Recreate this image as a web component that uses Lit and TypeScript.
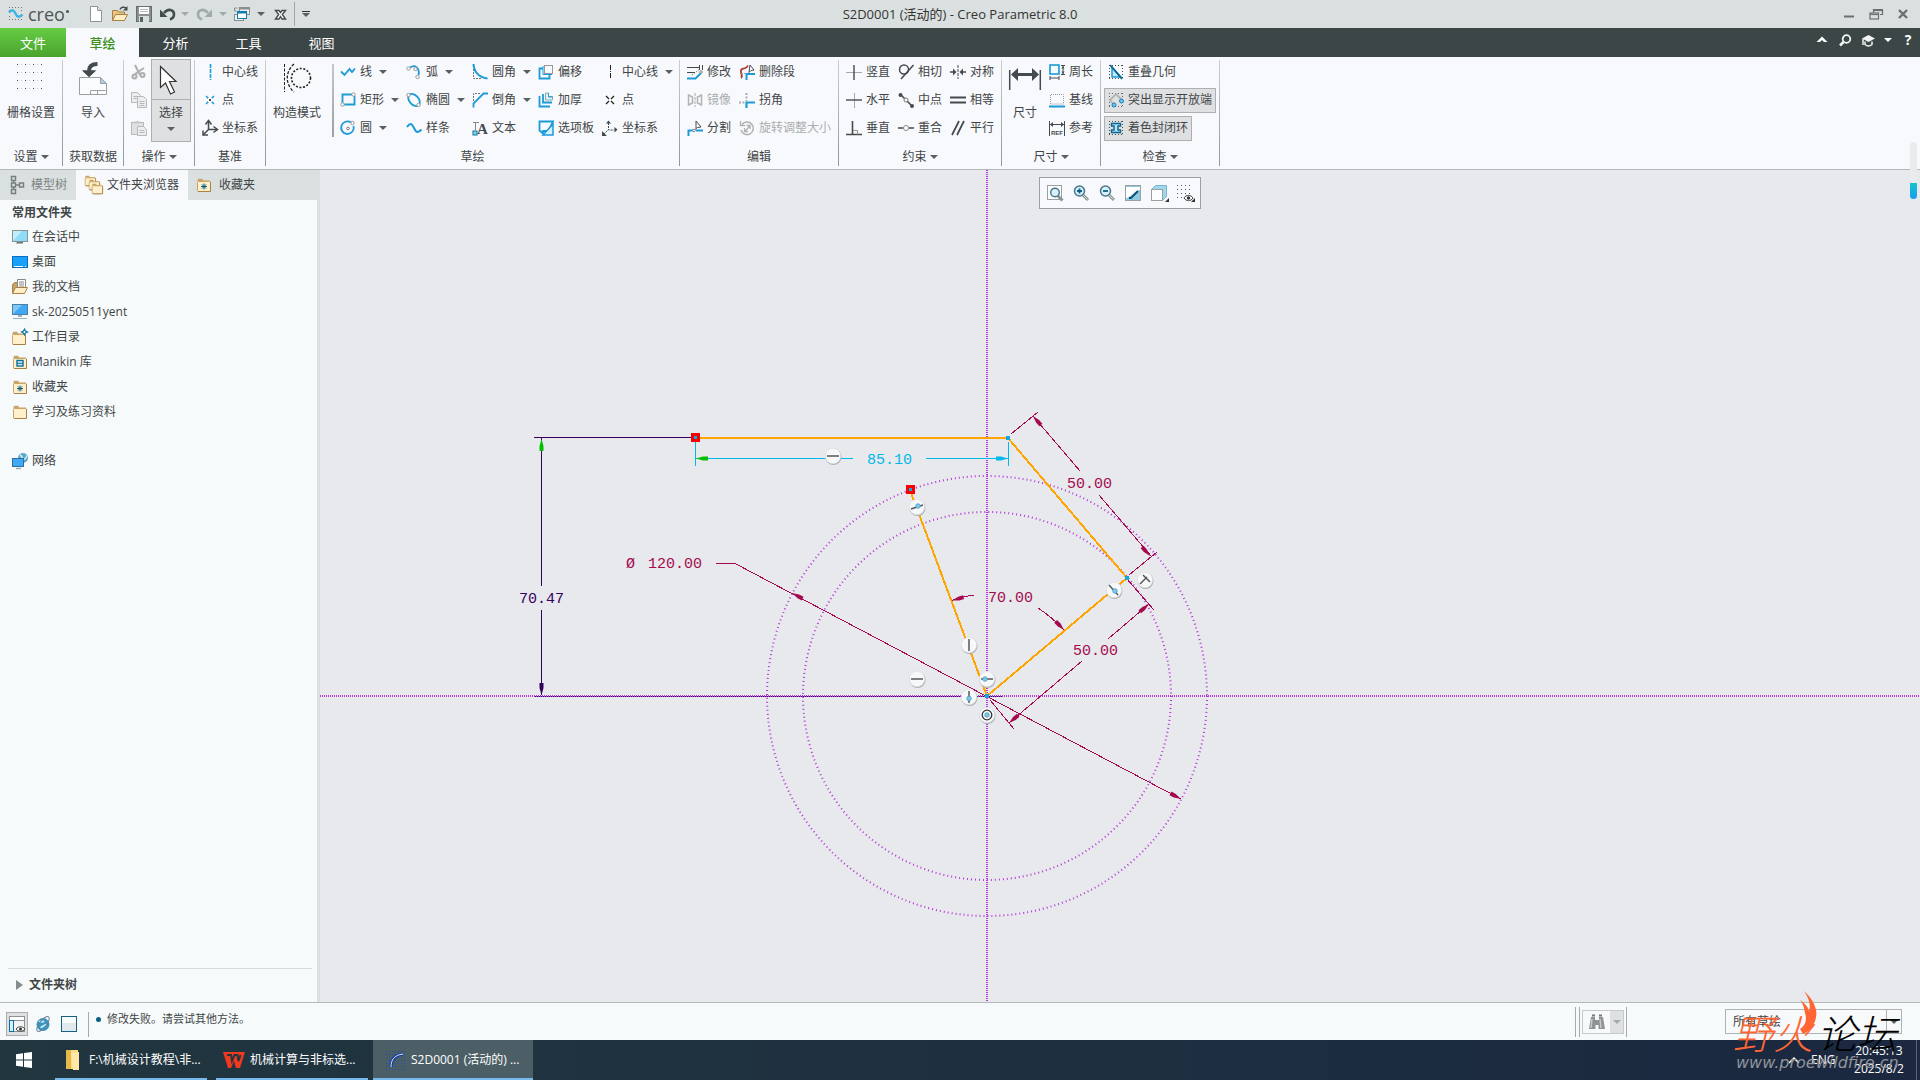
import { LitElement, html, svg, css, nothing, TemplateResult } from "lit";
import { customElement } from "lit/decorators.js";
import { classMap } from "lit/directives/class-map.js";

const B = "#1b9bd7";
const K = "#444b4d";

const folder = (x = 0, y = 0) => svg`<g transform="translate(${x} ${y})">
  <path d="M1.5 3.5V1.8L2.5.8H6L7.5 2.5H14V4z" fill="#c9a468"/>
  <rect x="1.5" y="3.5" width="13" height="10" rx="1" fill="#ffefcb" stroke="#c9a468"/>
  <path d="M2 13.5H14.5V4" fill="none" stroke="#a98243"/></g>`;

const star = (x: number, y: number, r = 3) => svg`<path d="M${x - r} ${y}h${2 * r}M${x} ${y - r}v${2 * r}M${x - r * 0.7} ${y - r * 0.7}l${r * 1.4} ${r * 1.4}M${x + r * 0.7} ${y - r * 0.7}l${-r * 1.4} ${r * 1.4}" stroke="#0d5f86" fill="none"/>`;

const ring = (x: number, y: number) => svg`<circle cx=${x} cy=${y} r="1.7" fill="#fff" stroke="#999"/>`;

const lens = (sign: unknown) => svg`<path d="M10 10l5 5" stroke="#8d9494" stroke-width="3"/><path d="M10 10l4.500 4.500" stroke="#d5dada"/><circle cx="6.500" cy="6" r="5" fill="#d8f1fb" stroke="#49748a" stroke-width="1.500"/>${sign}`;

const icons: Record<string, unknown> = {
  logo: svg`<g fill="#6d7778">${[1, 4, 7, 10, 13].map((x) => [1, 13].map((y) => svg`<rect x=${x} y=${y} width="1" height="1"/>`))}${[4, 10].map((y) => svg`<rect x="1" y=${y} width="1" height="1"/><rect x="13" y=${y} width="1" height="1"/>`)}</g><path d="M1 6.500C4 3 6 4 7.500 7.500S11 12 14.500 8.500" fill="none" stroke="#3cb4e5" stroke-width="2.400"/>`,
  newDoc: svg`<path d="M2.500.5h7l4 4v11h-11z" fill="#fff" stroke="#8d9494"/><path d="M9.500.5v4h4" fill="#dfe5e5" stroke="#8d9494"/>`,
  open: svg`<path d="M.5 14.500V4.500h5l1 1.500h6v3" fill="#e9c487" stroke="#a98243"/><path d="M.5 14.500l3-6h12l-3 6z" fill="#ffeec4" stroke="#a98243"/><path d="M8 3.500C9 1 12 .5 14 2" fill="none" stroke="${K}" stroke-width="1.500"/><path d="M15.500 0v4.500h-4.500z" fill="${K}"/>`,
  save: svg`<rect x=".5" y=".5" width="15" height="15" fill="#8a9192" stroke="#666d6e"/><rect x="3" y="1" width="10" height="7" fill="#fff"/><rect x="3" y="10" width="10" height="6" fill="#d7dcdc"/><rect x="4" y="11" width="3" height="5" fill="#5b6263"/><path d="M4 3.500h8M4 5.500h8" stroke="#bbb"/>`,
  undo: svg`<path d="M4 7C8 2 14 3.500 14 8.500 14 11 12.500 12.500 10 13.500" fill="none" stroke="${K}" stroke-width="2.600"/><path d="M0 3.500V11h7.500z" fill="${K}"/>`,
  redo: svg`<path d="M12 7C8 2 2 3.500 2 8.500 2 11 3.500 12.500 6 13.500" fill="none" stroke="#a3aaaa" stroke-width="2.600"/><path d="M16 3.500V11H8.500z" fill="#a3aaaa"/>`,
  windows: svg`<rect x="5.500" y="1.500" width="10" height="7" fill="#eef1f1" stroke="#888f90"/><path d="M5.500 2.500h10" stroke="#888f90" stroke-width="2"/><rect x=".5" y="8.500" width="9" height="6" fill="#eef1f1" stroke="#888f90"/><rect x="3.500" y="5.500" width="9" height="7" fill="#fff" stroke="#0e7fae"/><path d="M3.500 6.500h9" stroke="#0e7fae" stroke-width="2"/><path d="M.5 2v3h2M.5 2h3" fill="none" stroke="#888f90"/>`,
  closeBox: svg`<path d="M3.500 4.500h3.500l1.500 2 1.500-2h3.500l-3.200 4 3.200 4.500h-3.500l-1.500-2.500-1.500 2.500h-3.500l3.200-4.500z" fill="#fff" stroke="${K}" stroke-width="1.400"/>`,
  cut: svg`<g fill="none" stroke="#aaafaf" stroke-width="2"><path d="M4 1l5 10M13 4L4 10"/><circle cx="3.500" cy="12.500" r="2"/><circle cx="11.500" cy="11" r="2"/></g>`,
  copy: svg`<g fill="#eceeee" stroke="#b4b9b9"><path d="M.5.5h6l3 3v7h-9z"/><path d="M6.500 4.500h6l3 3v8h-9z"/></g><path d="M2.500 4.500h4M2.500 6.500h3M8.500 9.500h5M8.500 11.500h5M8.500 13.500h5" stroke="#b4b9b9"/>`,
  paste: svg`<rect x=".5" y="2.500" width="12" height="12" fill="#dfe2e2" stroke="#b4b9b9"/><path d="M3.500 3.500h6v-2h-2l-1-1-1 1h-2z" fill="#c3c7c7"/><path d="M6.500 6.500h6l3 3v6h-9z" fill="#eceeee" stroke="#b4b9b9"/><path d="M8.500 10.500h5M8.500 12.500h5" stroke="#b4b9b9"/>`,
  axis: svg`<path d="M8.500 0v16" stroke="${B}" stroke-width="1.600" stroke-dasharray="4 1"/>`,
  pointBlue: svg`<path d="M4 4l8 8M12 4l-8 8" stroke="${B}" stroke-width="1.500"/><rect x="6" y="6" width="4" height="4" fill="#f8f9fc"/><rect x="7" y="7" width="2" height="2" fill="${K}"/>`,
  csys: svg`<path d="M6.500 10V1M6.500 9.500H15M6.500 9.500L1 15" fill="none" stroke="${K}" stroke-width="1.500"/><path d="M3.500 4.500l3-4 3 4M11.500 6.500l4 3-4 3M1 10.500V15h5" fill="none" stroke="${K}" stroke-width="1.500"/>`,
  line: svg`<path d="M1 7.500l3.500 3.500 5-6 2.500 3 3-3.500" fill="none" stroke="${B}" stroke-width="1.800"/>`,
  rect: svg`<path d="M2.500 11V2.500H13M4 12.500h10.500V4" fill="none" stroke="${B}" stroke-width="1.800"/>${ring(13.5, 2.5)}${ring(2.5, 12.5)}`,
  circle: svg`<path d="M11 2.500A6.300 6.300 0 1 0 13.500 6" fill="none" stroke="${B}" stroke-width="1.800"/><circle cx="8" cy="8.500" r="1.300" fill="#fff" stroke="#777"/>${ring(12.5, 3)}`,
  arc: svg`<path d="M4 3.500C9 0 14 4 12.500 11" fill="none" stroke="${B}" stroke-width="1.800"/>${ring(2.5, 4.5)}${ring(9.5, 5)}${ring(11.5, 13)}`,
  ellipse: svg`<ellipse cx="8" cy="8" rx="7" ry="4.600" transform="rotate(48 8 8)" fill="none" stroke="${B}" stroke-width="1.800"/>${ring(2.5, 3)}${ring(12.5, 13)}`,
  spline: svg`<path d="M1 7C4 2 6 3.500 8 8s4 5.500 7.500 1.500" fill="none" stroke="${B}" stroke-width="2"/>`,
  fillet: svg`<path d="M1.500 0C2 8 6 13 15.500 14.500" fill="none" stroke="${B}" stroke-width="2"/><path d="M1.500 5v9.500H10" fill="none" stroke="#777" stroke-dasharray="2 1"/>`,
  chamfer: svg`<path d="M1.500 15.500V11.500L11.500 1.500H16" fill="none" stroke="${B}" stroke-width="1.800"/><path d="M1.500 9V1.500H9" fill="none" stroke="#777" stroke-dasharray="2 1"/>`,
  text: svg`<text x="5" y="14" font-family="Liberation Serif, serif" font-weight="bold" font-size="15" fill="${K}">A</text><path d="M1 2.500h6M3.500 2v8" stroke="#888"/><rect x="1" y="11" width="4" height="4" fill="#8bd3f2" stroke="#0d6f9e"/>`,
  offset: svg`<rect x="6.500" y="1.500" width="8" height="8" fill="none" stroke="#999"/><path d="M5 4.500H1.500v10h10V11" fill="none" stroke="${B}" stroke-width="1.800"/><path d="M5 2v8.500h9" fill="none" stroke="${B}"/>`,
  thicken: svg`<path d="M7.500 1v7h7V4.500h-4V1z" fill="#dff3fc" stroke="#8aa" /><path d="M10.500 1v4h4" stroke="${B}" fill="none"/><path d="M1.500 4v10.500H12M5 2v8.500h9" fill="none" stroke="${B}" stroke-width="1.800"/>`,
  palette: svg`<path d="M15 1.500H1.500v9L5 13.500V11h5.500z" fill="none" stroke="${B}" stroke-width="1.800"/><path d="M15 4v11H5z" fill="#d8f0fb" stroke="${B}" stroke-width="1.500"/>`,
  centerline: svg`<path d="M8.500 1v14" stroke="#222" stroke-width="1" stroke-dasharray="5 1 1 1"/>`,
  point: svg`<path d="M4 4l3 3M12 4l-3 3M4 12l3-3M12 12l-3-3" stroke="#222" stroke-width="1.300"/>`,
  csysDash: svg`<path d="M6.500 3v7h6M5.500 10.500L2 14" fill="none" stroke="${K}" stroke-dasharray="2 1"/><path d="M4 3.500L6.500.5 9 3.500zM12.500 7l3 2.500-3 3zM0 11v5h5z" fill="${K}"/>`,
  modify: svg`<path d="M0 3.500h13M0 8.500h8" stroke="${K}"/><path d="M12.500 1v5M15.500 1v5" stroke="${K}"/><path d="M0 14.500h8.500L14 9" fill="none" stroke="${B}" stroke-width="1.800"/><path d="M5 11l8-6" stroke="#888" stroke-dasharray="1.500 1"/><circle cx="14" cy="8" r="1.300" fill="#fff" stroke="#888"/>`,
  mirror: svg`<path d="M8 1v14" stroke="#aaa" stroke-dasharray="3 1"/><path d="M1.500 13V3l4 2v6zM14.500 13V3l-4 2v6z" fill="none" stroke="#b0b4b4" stroke-width="1.500"/>`,
  divide: svg`<path d="M1.500 16v-5.500H6M9 10.500h7" fill="none" stroke="${B}" stroke-width="2"/><path d="M9 1l5 6-3.500.5L6 11M9 1v7" fill="#fff" stroke="${K}"/><circle cx="7" cy="10.500" r="1.300" fill="#fff" stroke="#888"/>`,
  deleteSeg: svg`<path d="M2 14C5 12 0 8 2.500 5.500S7 6 9 1.500" fill="none" stroke="#b23a32" stroke-width="1.800"/><path d="M7.500 16v-6H16" fill="none" stroke="${B}" stroke-width="2"/><path d="M11 1l4 5-3 .5-2 2z" fill="#fff" stroke="${K}"/><path d="M2 9.500h4" stroke="#999" stroke-dasharray="2 1"/>`,
  corner: svg`<path d="M7.500 16v-5.500H16" fill="none" stroke="${B}" stroke-width="2.200"/><path d="M7.500 1v8M0 10.500h6" stroke="#aaa" stroke-width="2" stroke-dasharray="2 1.500"/>`,
  rotate: svg`<path d="M3 4.500A6.300 6.300 0 1 1 2 10" fill="none" stroke="#adb1b1" stroke-width="1.500"/><path d="M1.500 1v4.500H6M6 11l5-5M7.500 5.500H11V9M5.500 8v3.500H9" fill="none" stroke="#adb1b1" stroke-width="1.300"/>`,
  vertical: svg`<path d="M0 8.500h16" stroke="#a5a9a9"/><path d="M8 1v15" stroke="${K}" stroke-width="1.400"/>`,
  horizontal: svg`<path d="M8.500 1v15" stroke="#a5a9a9"/><path d="M0 8h16" stroke="${K}" stroke-width="1.400"/>`,
  perp: svg`<path d="M0 14.500h16M6.500 1v13" stroke="${K}" stroke-width="1.600" fill="none"/><path d="M7 10.500h4.500v4" fill="none" stroke="#999"/>`,
  tangent: svg`<circle cx="6" cy="5.500" r="4.500" fill="none" stroke="${K}" stroke-width="1.500"/><path d="M3 15L15.500 1" stroke="${K}" stroke-width="1.500"/>`,
  midpoint: svg`<path d="M3 3l10 10" stroke="${K}" stroke-width="1.600"/><circle cx="2.500" cy="3" r="2" fill="${K}"/><circle cx="14" cy="14" r="2" fill="${K}"/><circle cx="8" cy="8" r="2" fill="#fff" stroke="#777"/>`,
  coincide: svg`<path d="M0 8h5M11 8h5" stroke="${K}" stroke-width="1.500"/><circle cx="8" cy="8" r="2.500" fill="#fff" stroke="#888"/>`,
  symmetric: svg`<path d="M0 8h4M12 8h4" stroke="${K}" stroke-width="1.500"/><path d="M3 4.500L6.500 8 3 11.500zM13 4.500L9.500 8l3.500 3.500z" fill="${K}"/><path d="M8 1v14" stroke="${K}" stroke-dasharray="3 1"/>`,
  equal: svg`<path d="M0 5.500h16M0 10.500h16" stroke="${K}" stroke-width="1.800"/>`,
  parallel: svg`<path d="M2 15L9 1M7 15L14 1" stroke="${K}" stroke-width="1.700"/>`,
  perimeter: svg`<rect x="1" y="1" width="9" height="9" fill="#f3fbff" stroke="${B}" stroke-width="1.600"/><path d="M12 1.500h4M12 10.500h4M14 2v8M1 12v4M10 12v4M1 14h9" stroke="${K}" fill="none"/><path d="M12.500 4.500L14 2l1.500 2.500zM12.500 7.500L14 10l1.500-2.500z" fill="${K}"/>`,
  baseline: svg`<path d="M1.500 12V2.500h13V12z" fill="none" stroke="#999" stroke-dasharray="1 1"/><path d="M0 14.500h16" stroke="${B}" stroke-width="2"/>`,
  refDim: svg`<path d="M.5 1v15M15.500 1v15M1 4.500h14" stroke="${K}"/><path d="M1 4.500L4 2v5zM15 4.500L12 2v5z" fill="${K}"/><text x="2" y="15" font-family="Liberation Sans, sans-serif" font-size="6" font-weight="bold" fill="${K}">REF</text>`,
  overlap: svg`<path d="M1 1.500h14M1 14.500h14M1.500 1v14M14.500 1v14" stroke="${K}" stroke-dasharray="1 2"/><path d="M4 3v10h9z" fill="#c4ebfb" stroke="${B}" stroke-width="1.500"/><path d="M2 1l12 14" stroke="#0f628b" stroke-width="1.800"/>`,
  openEnds: svg`<path d="M1 1.500h14M1 14.500h14M1.500 1v14M14.500 1v14" stroke="#666" stroke-dasharray="1 2"/><path d="M5.500 12L2 8l6-6 6 6" fill="none" stroke="#b0b4b4" stroke-width="1.800"/><circle cx="6" cy="13" r="2" fill="#6cc8f0" stroke="#1583b5"/><circle cx="13.500" cy="9" r="2" fill="#6cc8f0" stroke="#1583b5"/>`,
  shadeLoops: svg`<path d="M1 1.500h14M1 14.500h14M1.500 1v14M14.500 1v14" stroke="${K}" stroke-dasharray="1 2"/><path d="M3.500 3.500h9v2.500h-2.500v4h2.500v2.500h-9V10H6V6H3.500z" fill="#aee6fb" stroke="#0f628b" stroke-width="1.400"/>`,
  gridBig: svg`<g fill="${K}">${[2, 10, 18, 26].map((x) => [2, 10, 18, 26].map((y) => svg`<rect x=${x} y=${y} width="1" height="1"/>`))}</g><g fill="#c3c8c8">${[6, 14, 22].map((x) => [2, 10, 18, 26].map((y) => svg`<rect x=${x} y=${y} width="1" height="1"/>`))}</g>`,
  importBig: svg`<path d="M20.500 2C14 2 12 5 12 9" fill="none" stroke="${K}" stroke-width="4"/><path d="M5 8.500h14L12 15z" fill="${K}"/><path d="M2.500 15.500h21l6 6v11h-27z" fill="#fbfcfd" stroke="#9aa0a0"/><path d="M23.500 15.500v6h6z" fill="#a9cfe3" stroke="#9aa0a0"/><path d="M12 9v3" stroke="${K}" stroke-width="4"/><path d="M5.500 8.500h13.500L12 15z" fill="${K}"/><path d="M14 28.500h14.500M20.500 28.500v4M13.500 28.500v4" stroke="#9aa0a0"/>`,
  cursorBig: svg`<path d="M5.500 2.500v21l5-4.500 5 11 4-2-5-10.500h6.500z" fill="#fff" stroke="#333" stroke-width="1.200"/>`,
  constructBig: svg`<path d="M3.500 2v28" stroke="#222" stroke-dasharray="3 1.500"/><path d="M13 2C4 10 4 22 13 30" fill="none" stroke="#222" stroke-width="1.300" stroke-dasharray="3 1.500"/><circle cx="20" cy="16" r="9.500" fill="none" stroke="#222" stroke-width="1.600" stroke-dasharray="2 1.600"/>`,
  dimBig: svg`<path d="M.7 8v20M31.300 8v20" stroke="${K}" stroke-width="1.500"/><path d="M6 12.500h20" stroke="${K}" stroke-width="3"/><path d="M2 12.500L9 6v13zM30 12.500L23 6v13z" fill="${K}"/>`,
  tree: svg`<g fill="none" stroke="#777f80" stroke-width="1.500"><rect x="2.500" y="-.5" width="4" height="4"/><rect x="2.500" y="6" width="4" height="4"/><rect x="10.500" y="6" width="4" height="4"/><rect x="2.500" y="12.500" width="4" height="4"/><path d="M4.500 3.500v2.500M4.500 10v2.500M6.500 8h4"/></g>`,
  folders: svg`<g transform="translate(-1 -2)scale(.8)">${folder()}</g><g transform="translate(3 2)scale(.8)">${folder()}</g><g transform="translate(6 6)scale(.8)">${folder()}</g>`,
  fav: svg`${folder(0, 1)}${star(8, 9.5)}`,
  monitor: svg`<rect x=".5" y="1.500" width="15" height="11" fill="#8edcf8" stroke="#8b9293"/><path d="M1 12V2h9z" fill="#c2eefc"/><path d="M5 13h6v1.500H4z" fill="#6b7374"/>`,
  desktop: svg`<rect x=".5" y="2.500" width="15" height="11" fill="#18a0fb" stroke="#0a6fbd"/><path d="M2 12.500h9M13 12.500h1" stroke="#fff"/>`,
  docs: svg`<path d="M.5 14.500V5.500l2-2h3v4" fill="#c9a468" stroke="#a98243"/><path d="M5.500.5h8v9h-8z" fill="#fff" stroke="#888"/><path d="M7 3h5M7 5h5M7 7h5" stroke="#888"/><path d="M.5 14.500l3-6h12l-3 6z" fill="#ffeec4" stroke="#a98243"/>`,
  computer: svg`<rect x=".5" y=".5" width="15" height="10" fill="#3fa9f5" stroke="#4d7ea3"/><path d="M1 10V1h9z" fill="#7fc9fa"/><path d="M6 11h4v2H6z" fill="#9bb5c6"/><path d="M1 14.500h14" stroke="#9bb5c6"/>`,
  workdir: svg`${folder(-1, 2)}<path d="M12.500 0l1 2 2 1-2 1-1 2-1-2-2-1 2-1z" fill="#fff" stroke="#0d75a5" stroke-width="1.200"/>`,
  manikin: svg`${folder(0, 1)}<rect x="5" y="6.500" width="6" height="5.500" fill="#d3eefa" stroke="#0d6f9e" stroke-width="1.400"/><path d="M5 9.300h6" stroke="#0d6f9e"/>`,
  folder: folder(0, 1),
  network: svg`<circle cx="11" cy="5" r="5" fill="#5fa9cc"/><path d="M8 2c3 1 1 4 4 4s2-3 3-3" stroke="#d3edf7" stroke-width="1.500" fill="none"/><rect x=".5" y="5.500" width="11" height="8" fill="#3fa9f5" stroke="#2f6f9f"/><path d="M4 15.500h5" stroke="#8fa9b8" stroke-width="1.400"/>`,
  refit: svg`<rect x=".5" y=".5" width="14" height="14" fill="#fff" stroke="#9aa0a0"/><path d="M10.500 10.500l5 5" stroke="#8d9494" stroke-width="3"/><circle cx="8" cy="7.500" r="4.300" fill="#d8f1fb" stroke="#49748a" stroke-width="1.400"/>`,
  zoomIn: lens(svg`<path d="M4 6h5M6.500 3.500v5" stroke="#0d5f86" stroke-width="1.800"/>`),
  zoomOut: lens(svg`<path d="M4 6h5" stroke="#0d5f86" stroke-width="1.800"/>`),
  repaint: svg`<rect x=".5" y=".5" width="15" height="15" fill="#8fc9e2" stroke="#9aa0a0"/><path d="M1 2h14v3C9 6 8 10 2 13H1z" fill="#fff"/><path d="M13 6L6 13H4" stroke="#0f4f70" stroke-width="1.800" fill="none"/>`,
  display: svg`<path d="M.5 4.500l4-4h11v11l-4 4h-11z" fill="#9fd8ee" stroke="#7fb5cc"/><rect x=".5" y="4.500" width="11" height="11" fill="#fff" stroke="#9aa0a0"/><path d="M18 13v4h-4z" fill="#333"/>`,
  datum: svg`<g fill="#555">${[0, 4, 8, 12].map((x) => [0, 4, 8, 12].map((y) => svg`<rect x=${x} y=${y} width="1" height="1"/>`))}</g><path d="M7 13c2-3.500 7-3.500 9 0-2 3.500-7 3.500-9 0z" fill="#fff" stroke="#444"/><circle cx="11.500" cy="13" r="1.700" fill="#333"/><path d="M18 13v4h-4z" fill="#333"/>`,
  layout: svg`<rect x=".5" y=".5" width="15" height="15" fill="#f2f3f3" stroke="#8d9393"/><path d="M1 2.500h14" stroke="#fff" stroke-width="3"/><path d="M1 4.500h14" stroke="#8d9393"/><rect x=".5" y="4.500" width="4" height="11" fill="#d4effa" stroke="#0d6f9e"/><path d="M7 13c2-3 7-3 9 0-2 3-7 3-9 0z" fill="#fff" stroke="#444"/><circle cx="11.500" cy="13" r="1.500" fill="#333"/>`,
  globe: svg`<circle cx="8" cy="8.500" r="6.500" fill="#3795c6"/><path d="M4 6c2-2 3 1 5-1M6 12c1-3 4-1 5-4" stroke="#bfe6f5" stroke-width="2.200" fill="none"/><ellipse cx="8" cy="8" rx="9" ry="3.500" transform="rotate(-52 8 8)" fill="none" stroke="#6b7f89"/>`,
  square: svg`<rect x=".5" y=".5" width="15" height="15" fill="#e0e9ed" stroke="#17607f"/><path d="M1 1h14v6H1z" fill="#f8fbfb"/>`,
  binocular: svg`<path d="M2 3h4v3h4V3h4l2 12H9.500v-4h-3v4H0z" fill="#8e9393"/><path d="M3 1.500h3M10 1.500h3" stroke="#777" stroke-width="2"/><path d="M3 5l-1 9M11 5l1 9" stroke="#c7caca" stroke-width="1.500"/>`,
  minimize: svg`<path d="M2 9.500h10" stroke="#6b6f70" stroke-width="2"/>`,
  restore: svg`<g fill="none" stroke="#6b6f70" stroke-width="1.200"><path d="M4.500 6V2.500h9v5H11"/><path d="M4.500 3.500h9" /><rect x="1" y="6" width="8.500" height="6"/><path d="M1 7.500h8.500"/></g>`,
  close: svg`<path d="M3 3l8 8M11 3l-8 8" stroke="#6b6f70" stroke-width="2.400"/>`,
  up: svg`<path d="M1.500 9L7 3.500l5.500 5.500H9L7 7l-2 2z" fill="#fff"/>`,
  search: svg`<circle cx="8.500" cy="6" r="3.800" fill="none" stroke="#f1f4f4" stroke-width="1.800"/><path d="M5.500 9L2 12.500" stroke="#f1f4f4" stroke-width="2.600"/>`,
  cap: svg`<path d="M1 5.500L7.500 2 14 5.500 7.500 9z" fill="#f1f4f4"/><path d="M4 8.500v3c2 1.600 5 1.600 7 0v-3M2 6v6" fill="none" stroke="#f1f4f4" stroke-width="1.500"/>`,
  win: svg`<path d="M0 2.200L7 1.200V7.500H0zM8 1L16 0V7.500H8zM0 8.500H7V14.800L0 13.800zM8 8.500H16V16L8 15z" fill="#fff"/>`,
  explorer: svg`<path d="M5 2h12v19H5z" fill="#f8dc86"/><path d="M5 2h5v19H5z" fill="#e5b94a"/><path d="M10 5l8-1v18h-6z" fill="#ffe9a8"/>`,
  wps: svg`<path d="M1 4h22l-5 16h-4l-2-7-3 7H6z" fill="#f0391f"/><path d="M5 7h4l1 6 2.500-6h3l1 6 2-6" fill="none" stroke="#21363f" stroke-width="2"/>`,
  creoDoc: svg`<g fill="#1d4fa5">${[3, 6, 9, 12, 15, 18, 21].map((x) => [3, 6, 9, 12, 15, 18, 21].map((y) => svg`<rect x=${x} y=${y} width="1" height="1"/>`))}</g><path d="M8 19C8 12 11 7 20 6" fill="none" stroke="#173f9c" stroke-width="3"/><path d="M8 19C8 12 11 7 20 6" fill="none" stroke="#dce7f8"/>`,
};

const icon = (name: string, size = 16) => html`<svg class="ico" width=${size} height=${size} viewBox="0 0 ${size} ${size}" aria-hidden="true">${icons[name]}</svg>`;

interface Cmd {
  icon: string;
  label: string;
  menu?: boolean;
  off?: boolean;
  on?: boolean;
}
const c = (i: string, label: string, o: Partial<Cmd> = {}): Cmd => ({ icon: i, label, ...o });
const M = { menu: true };

const datum = [c("axis", "中心线"), c("pointBlue", "点"), c("csys", "坐标系")];
const sketch = [
  c("line", "线", M), c("rect", "矩形", M), c("circle", "圆", M),
  c("arc", "弧", M), c("ellipse", "椭圆", M), c("spline", "样条"),
  c("fillet", "圆角", M), c("chamfer", "倒角", M), c("text", "文本"),
  c("offset", "偏移"), c("thicken", "加厚"), c("palette", "选项板"),
  c("centerline", "中心线", M), c("point", "点"), c("csysDash", "坐标系"),
];
const edit = [
  c("modify", "修改"), c("mirror", "镜像", { off: true }), c("divide", "分割"),
  c("deleteSeg", "删除段"), c("corner", "拐角"), c("rotate", "旋转调整大小", { off: true }),
];
const constrain = [
  c("vertical", "竖直"), c("horizontal", "水平"), c("perp", "垂直"),
  c("tangent", "相切"), c("midpoint", "中点"), c("coincide", "重合"),
  c("symmetric", "对称"), c("equal", "相等"), c("parallel", "平行"),
];
const dims = [c("perimeter", "周长"), c("baseline", "基线"), c("refDim", "参考")];
const inspect = [c("overlap", "重叠几何"), c("openEnds", "突出显示开放端", { on: true }), c("shadeLoops", "着色封闭环", { on: true })];

const places = [
  ["monitor", "在会话中"], ["desktop", "桌面"], ["docs", "我的文档"], ["computer", "sk-20250511yent"],
  ["workdir", "工作目录"], ["manikin", "Manikin 库"], ["fav", "收藏夹"], ["folder", "学习及练习资料"],
];

const caret = html`<span class="caret"></span>`;

@customElement("app-root")
export class AppRoot extends LitElement {
  static styles = css`
    :host {
      display: flex;
      flex-direction: column;
      position: relative;
      min-height: 100vh;
      overflow: hidden;
      font: 12px/16px "Open Sans", "Noto Sans CJK SC", sans-serif;
      color: #3f4546;
      background: #f8f9fc;
    }
    * { box-sizing: border-box; }
    button, select {
      font: inherit;
      color: inherit;
      background: none;
      border: 0;
      padding: 0;
      margin: 0;
      display: inline-flex;
      align-items: center;
      white-space: nowrap;
    }
    .ico { display: block; flex: none; overflow: visible; }
    .caret {
      flex: none;
      border: 4px solid transparent;
      border-top-color: #5a6061;
      border-bottom: 0;
    }
    .caret.dim { border-top-color: #a3aaaa; }

    .titlebar {
      display: grid;
      grid-template-columns: 1fr auto 1fr;
      align-items: center;
      height: 28px;
      background: #dae0df;
    }
    .titlebar h1 { margin: 0; font-size: 13px; font-weight: 400; color: #333; }
    .quick { display: flex; align-items: center; }
    .brand { display: flex; align-items: center; gap: 4px; width: 84px; padding-left: 8px; }
    .brand span { font-size: 18px; line-height: 20px; color: #4d5556; }
    .brand i { width: 3px; height: 3px; margin: 0 0 6px -3px; background: #4d5556; border-radius: 3px; }
    .q { width: 24px; height: 24px; justify-content: center; }
    .q.wide { width: 28px; }
    .drop { width: 10px; height: 24px; justify-content: center; }
    .drop.more { width: 22px; flex-direction: column; gap: 1px; }
    .drop.more::before { content: ""; width: 8px; height: 1px; background: #333; }
    .qsep { width: 1px; height: 24px; background: #9ea6a6; }
    .winctl { display: flex; justify-content: flex-end; gap: 13px; padding-right: 10px; }

    .tabs { display: flex; height: 29px; background: #3d4647; color: #fff; font-size: 13px; }
    .tabs > button { width: 73px; justify-content: center; }
    .tabs .file { width: 66px; background: linear-gradient(#66cc44, #4aa32e); }
    .tabs .active { background: #f8f9fc; color: #3f8f1f; font-weight: 500; }
    .tabs .help { display: flex; align-items: center; margin-left: auto; padding: 0 5px 6px 0; gap: 9px; }
    .tabs .help button { width: 14px; justify-content: center; }
    .tabs .help .menu { width: 8px; }
    .tabs .help .caret { border-top-color: #fff; }
    .tabs .help .q-mark { font-weight: 700; font-size: 14px; }

    .ribbon { display: flex; height: 113px; border-bottom: 1px solid #b0bbba; padding-top: 1px; }
    .group { display: flex; flex-direction: column; }
    .rule { width: 1px; margin: 2px 0 3px; background: linear-gradient(#c9cecf, #8f9999); }
    .body { display: flex; height: 84px; }
    .group > .name { height: 27px; justify-content: center; gap: 3px; padding-top: 2px; display: flex; align-items: center; }
    .cmds { display: grid; grid-auto-flow: column; grid-template-rows: repeat(3, 28px); align-items: center; justify-items: start; }
    .cmds.datum { padding-left: 7px; grid-template-columns: 63px; }
    .cmds.sketch { padding-left: 6px; grid-template-columns: 66px 66px 66px 64px 77px; }
    .cmds.edit { padding-left: 7px; grid-template-columns: 52px 99px; }
    .cmds.constrain { padding-left: 7px; grid-template-columns: 52px 52px 51px; }
    .cmds.dims { padding-left: 1px; grid-template-columns: 51px; }
    .cmds.inspect { padding: 0 3px; grid-template-columns: auto; }
    .cmd { gap: 4px; height: 25px; }
    .cmd .caret { margin-left: 3px; }
    .cmd:disabled { color: #a9aeae; }
    .inspect .cmd { border: 1px solid transparent; padding: 0 3px; }
    .inspect .cmd.on { background: #dfe0e2; border-color: #adb0b2; }
    .big { flex-direction: column; justify-content: flex-start; gap: 11px; padding-top: 4px; }
    .b60 { width: 60px; }
    .b62 { width: 62px; }
    .b46 { width: 46px; }
    .mini { display: grid; grid-template-rows: repeat(3, 28px); padding: 0 4px 0 7px; }
    .mini button { height: 28px; }
    .select { flex-direction: column; width: 40px; height: 83px; margin: 1px 3px 0 0; border: 1px solid #adb0b2; background: #dfe0e2; }
    .select .top { display: flex; justify-content: center; align-items: center; width: 100%; height: 40px; border-bottom: 1px solid #adb0b2; }
    .select .txt { display: flex; flex-direction: column; align-items: center; gap: 6px; padding-top: 5px; }
    .inner { width: 2px; height: 73px; margin: 6px 0 0 4px; background: linear-gradient(#c3c9c9, #98a2a2); }

    .main { display: flex; flex: 1; min-height: 0; }
    .side { display: flex; flex-direction: column; width: 320px; flex: none; background: #f6fafb; border-right: 3px solid #dae0df; }
    .sidetabs { display: flex; height: 30px; margin-right: -3px; background: #dae0df; }
    .sidetabs button { gap: 6px; }
    .sidetabs .t1 { width: 76px; padding-left: 9px; color: #7d8485; }
    .sidetabs .t2 { width: 112px; padding-left: 9px; background: #f8f9fc; }
    .sidetabs .t3 { padding-left: 8px; gap: 7px; }
    .side h2 { margin: 0; padding: 5px 12px 0; font-size: 12px; line-height: 16px; font-weight: 700; }
    .places { list-style: none; margin: 0; padding: 3px 12px 0; }
    .places a { display: flex; align-items: center; gap: 4px; height: 25px; color: inherit; text-decoration: none; }
    .places .gap { margin-top: 24px; }
    .foldertree { margin: auto 5px 0 8px; height: 34px; border-top: 1px solid #d5dbdb; padding: 0 0 2px 8px; gap: 6px; font-weight: 700; }
    .foldertree::before { content: ""; border: 5px solid transparent; border-left: 7px solid #868d8e; border-right: 0; }

    .canvas { position: relative; flex: 1; display: flex; justify-content: center; align-items: flex-start; padding-top: 7px; background: #e8e9ed; overflow: hidden; }
    .drawing { position: absolute; inset: 0; width: 100%; height: 100%; }
    .drawing text { font: 15px "Liberation Mono", monospace; }
    .viewbar { position: relative; display: flex; gap: 2px; height: 32px; padding: 0 3px; border: 1px solid #9a9fa0; background: #f8f9fc; }
    .viewbar button { width: 24px; justify-content: center; }

    .status { display: flex; align-items: center; height: 38px; border-top: 1px solid #b0bbba; background: #f6fafb; padding-left: 6px; }
    .status .pane { width: 22px; height: 24px; justify-content: center; }
    .status .pane.on { border: 1px solid #a9adae; background: #dfe0e2; }
    .status .icons { display: flex; gap: 4px; align-self: flex-end; padding-bottom: 4px; }
    .status .msgs { display: flex; align-self: flex-end; height: 25px; margin: 0 0 3px 8px; border-left: 1px solid #a3abab; padding-left: 7px; font-size: 11px; }
    .status .msg { display: flex; align-items: center; gap: 6px; height: 14px; }
    .status .msg::before { content: ""; width: 5px; height: 5px; border-radius: 5px; background: #0d5f86; }
    .find { display: flex; align-items: center; margin-left: auto; height: 30px; padding: 0 2px; border: 1px solid #a3abab; border-width: 0 1px; }
    .find::before { content: ""; width: 1px; height: 30px; background: #a3abab; margin: 0 2px 0 1px; }
    .find button { height: 24px; border: 1px solid #c5caca; justify-content: center; }
    .find .look { width: 28px; border-right: 0; }
    .find .arrow { width: 14px; background: #dfe0e2; border-left: 0; }
    .find .caret { border-top-color: #a3aaaa; }
    .filter { position: relative; display: flex; width: 177px; height: 25px; margin: 0 18px 0 98px; }
    .filter select { appearance: none; width: 100%; border: 1px solid #adb3b3; padding: 0 8px 0 7px; background: linear-gradient(#adb3b3, #adb3b3) calc(100% - 14px) 0 / 1px 100% no-repeat #f8f9fa; border-radius: 0; }
    .filter .caret { position: absolute; right: 4px; top: 11px; }

    .taskbar { display: flex; height: 40px; gap: 1px; color: #fff; background: linear-gradient(90deg, #21363f, #1e3040 50%, #1b2840); }
    .taskbar .start { width: 50px; padding-left: 16px; }
    .task { position: relative; width: 160px; padding-left: 10px; gap: 4px; }
    .task::after { content: ""; position: absolute; left: 4px; right: 4px; bottom: 0; height: 2px; background: #76b9ed; }
    .task.active { background: #4c5f66; }
    .task.active::after { left: 0; right: 0; }
    .tray { display: flex; align-items: center; margin-left: auto; padding-right: 3px; }
    .tray .clock { width: 75px; text-align: center; line-height: 18px; border-right: 1px solid #5b6775; height: 40px; display: block; }
    .tray .lang { width: 31px; }
    .tray .more { width: 18px; margin-right: 5px; }

    .gauge { position: absolute; right: 3px; top: 142px; width: 7px; height: 57px; border-radius: 4px; background: linear-gradient(#e9ebed 41px, #14c4c8 41px, #1a9cf5); }

    .mark { position: absolute; right: 15px; bottom: 5px; width: 172px; height: 84px; pointer-events: none; }
    .mark b { position: absolute; left: 0; top: 16px; font: italic 300 40px/50px "Noto Sans CJK SC", sans-serif; white-space: nowrap; color: #000; }
    .mark b span { color: #ff6633; margin-right: 4px; }
    .mark em { position: absolute; left: 3px; top: 63px; font: italic 16px/18px "DejaVu Sans", sans-serif; color: #8f9499; }
    .mark svg { position: absolute; left: 66px; top: 0; }
  `;

  private cmd(x: Cmd) {
    return html`<button class=${classMap({ cmd: true, on: !!x.on })} ?disabled=${!!x.off}>${icon(x.icon)}<span>${x.label}</span>${x.menu ? caret : nothing}</button>`;
  }

  private cmds(kind: string, list: Cmd[]) {
    return html`<div class="cmds ${kind}">${list.map((x) => this.cmd(x))}</div>`;
  }

  private group(name: string, menu: boolean, body: TemplateResult) {
    return html`<section class="group">
      <div class="body">${body}</div>
      ${menu ? html`<button class="name">${name}${caret}</button>` : html`<div class="name">${name}</div>`}
    </section><div class="rule"></div>`;
  }

  private arrow(x: number, y: number, deg: number, color: string) {
    return svg`<path d="M0 0L-7 -2H-12V2H-7z" fill=${color} transform="translate(${x} ${y}) rotate(${deg})"/>`;
  }

  private badge(x: number, y: number, glyph: unknown) {
    return svg`<g transform="translate(${x} ${y})"><circle cx=".5" cy="1" r="8" fill="#aeb1b4"/><circle r="7.700" fill="#f7f8f9" stroke="#d9dbdd" stroke-width=".6"/>${glyph}</g>`;
  }

  private drawing() {
    const V = "#b437d8";
    const R = "#a50a50";
    const D = "#35005f";
    const C = "#00b9ea";
    const O = "#ffa500";
    const ln = "#55595b";
    const dot = (x: number, y: number) => svg`<circle cx=${x} cy=${y} r="2.300" fill="#7cc9e8" stroke="#4699bd" stroke-width=".7"/>`;
    const bar = svg`<path d="M-6 0H6" stroke=${ln} stroke-width="1.500"/>`;
    return html`<svg class="drawing" role="img" aria-label="S2D0001">
      <g transform="translate(-320 -170)" fill="none">
        <g stroke=${V} stroke-width="2" stroke-dasharray="1 3">
          <circle cx="987" cy="696" r="220"/><circle cx="987" cy="696" r="184"/>
        </g>
        <g shape-rendering="crispEdges">
          <path d="M534 437.500H695M541.500 438V586M541.500 610V695M534 696.500H1003" stroke=${D}/>
          <path d="M320 696H1920M987 170V1002" stroke=${V} stroke-width="2" stroke-dasharray="1 1"/>
          <path d="M695.500 442V466M1008.500 442V466M695 458.500H853M926 458.500H1008" stroke=${C}/>
          <path d="M716 563.500H735L1181 799M1033 416L1080 471M1099 495L1151 556M1011 434L1038 412M1129 575L1157 552M1127 579L1154 610M990 700L1014 729M1009 723L1082 661M1108 639L1149 604" stroke=${R}/>
          <path d="M952 600.500Q963 596 974 595.500M1038 608Q1053 618 1064 630" stroke=${R}/>
          <path d="M695 438H1008L1127 578L987 696L910 490" stroke=${O} stroke-width="2"/>
        </g>
        ${this.arrow(541.5, 439, -90, "#00c000")}${this.arrow(541.5, 695, 90, D)}
        ${this.arrow(696, 458.5, 180, "#00c000")}${this.arrow(1008, 458.5, 0, C)}
        ${this.arrow(792, 593, 208, R)}${this.arrow(1181, 799, 28, R)}
        ${this.arrow(1033, 416, 229, R)}${this.arrow(1150, 556, 49, R)}
        ${this.arrow(1009, 723, 140, R)}${this.arrow(1149, 604, -40, R)}
        ${this.arrow(952, 600.5, 164, R)}${this.arrow(1064, 630, 46, R)}
        <path d="M691 433h9v9h-9zM906 485h9v9h-9z" fill="#f90000"/>
        <path d="M694 436h3v3h-3zM909 488h3v3h-3zM1006 436h4v4h-4zM985 694h4v4h-4zM1125 576h4v4h-4z" fill="#12a9dc"/>
        <g stroke="none">
          <text x="867" y="464" fill=${C}>85.10</text>
          <text x="519" y="603" fill=${D}>70.47</text>
          <text x="1067" y="488" fill=${R}>50.00</text>
          <text x="1073" y="655" fill=${R}>50.00</text>
          <text x="988" y="602" fill=${R}>70.00</text>
          <text x="626" y="568" fill=${R}>Ø</text>
          <text x="648" y="568" fill=${R}>120.00</text>
        </g>
        ${this.badge(833, 456, bar)}
        ${this.badge(917, 507, svg`<path d="M-6 2L6 -2" stroke=${ln} stroke-width="1.500"/>${dot(1, -1)}`)}
        ${this.badge(969, 645, svg`<path d="M0 -6V6" stroke=${ln} stroke-width="1.500"/>`)}
        ${this.badge(917, 679, bar)}
        ${this.badge(987, 679, svg`${bar}${dot(-2, 0)}`)}
        ${this.badge(969, 697, svg`<path d="M0 -6V6" stroke=${ln} stroke-width="1.500"/>${dot(0, 1.5)}`)}
        ${this.badge(987, 715, svg`<circle r="4.800" stroke="#333" stroke-width="1.300"/>${dot(0, 0)}`)}
        ${this.badge(1114, 590, svg`<path d="M-5 -5L4 5" stroke=${ln} stroke-width="1.500"/>${dot(1, 1)}`)}
        ${this.badge(1145, 580, svg`<path d="M-5 4L2 -3M-2 -5L5 2" stroke=${ln} stroke-width="1.500"/>`)}
      </g>
    </svg>`;
  }

  render() {
    return html`
      <header class="titlebar">
        <div class="quick">
          <div class="brand">${icon("logo")}<span>creo</span><i></i></div>
          <button class="q" aria-label="新建">${icon("newDoc")}</button>
          <button class="q" aria-label="打开">${icon("open")}</button>
          <button class="q" aria-label="保存">${icon("save")}</button>
          <button class="q" aria-label="撤消">${icon("undo")}</button>
          <button class="drop" aria-label="撤消列表"><span class="caret dim"></span></button>
          <button class="q wide" aria-label="重做">${icon("redo")}</button>
          <button class="drop" aria-label="重做列表"><span class="caret dim"></span></button>
          <button class="q wide" aria-label="窗口">${icon("windows")}</button>
          <button class="drop" aria-label="窗口列表">${caret}</button>
          <button class="q wide" aria-label="关闭窗口">${icon("closeBox")}</button>
          <div class="qsep"></div>
          <button class="drop more" aria-label="自定义">${caret}</button>
        </div>
        <h1>S2D0001 (活动的) - Creo Parametric 8.0</h1>
        <div class="winctl">
          <button aria-label="最小化">${icon("minimize", 14)}</button>
          <button aria-label="还原">${icon("restore", 14)}</button>
          <button aria-label="关闭">${icon("close", 14)}</button>
        </div>
      </header>

      <nav class="tabs">
        <button class="file">文件</button>
        <button class="active">草绘</button>
        <button>分析</button><button>工具</button><button>视图</button>
        <div class="help">
          <button aria-label="折叠">${icon("up", 14)}</button>
          <button aria-label="搜索">${icon("search", 14)}</button>
          <button aria-label="学习">${icon("cap", 14)}</button>
          <button class="menu" aria-label="菜单">${caret}</button>
          <button class="q-mark" aria-label="帮助">?</button>
        </div>
      </nav>

      <div class="ribbon">
        ${this.group("设置", true, html`<button class="big b62">${icon("gridBig", 32)}栅格设置</button>`)}
        ${this.group("获取数据", false, html`<button class="big b60">${icon("importBig", 32)}导入</button>`)}
        ${this.group("操作", true, html`<div class="mini">
            <button aria-label="剪切" disabled>${icon("cut")}</button>
            <button aria-label="复制" disabled>${icon("copy")}</button>
            <button aria-label="粘贴" disabled>${icon("paste")}</button>
          </div>
          <button class="select"><span class="top">${icon("cursorBig", 32)}</span><span class="txt">选择${caret}</span></button>`)}
        ${this.group("基准", false, this.cmds("datum", datum))}
        ${this.group("草绘", false, html`<button class="big b62">${icon("constructBig", 32)}构造模式</button><div class="inner"></div>${this.cmds("sketch", sketch)}`)}
        ${this.group("编辑", false, this.cmds("edit", edit))}
        ${this.group("约束", true, this.cmds("constrain", constrain))}
        ${this.group("尺寸", true, html`<button class="big b46">${icon("dimBig", 32)}尺寸</button>${this.cmds("dims", dims)}`)}
        ${this.group("检查", true, this.cmds("inspect", inspect))}
      </div>

      <div class="main">
        <aside class="side">
          <div class="sidetabs">
            <button class="t1">${icon("tree")}模型树</button>
            <button class="t2">${icon("folders")}文件夹浏览器</button>
            <button class="t3">${icon("fav")}收藏夹</button>
          </div>
          <h2>常用文件夹</h2>
          <ul class="places">
            ${places.map(([i, t]) => html`<li><a href="#">${icon(i)}${t}</a></li>`)}
            <li class="gap"><a href="#">${icon("network")}网络</a></li>
          </ul>
          <button class="foldertree">文件夹树</button>
        </aside>
        <main class="canvas">
          ${this.drawing()}
          <div class="viewbar">
            ${[["refit", "重新调整"], ["zoomIn", "放大"], ["zoomOut", "缩小"], ["repaint", "重画"], ["display", "显示样式"], ["datum", "基准显示"]].map(([i, t]) => html`<button aria-label=${t}>${icon(i)}</button>`)}
          </div>
        </main>
      </div>

      <footer class="status">
        <div class="icons">
          <button class="pane on" aria-label="导航器">${icon("layout")}</button>
          <button class="pane" aria-label="浏览器">${icon("globe")}</button>
          <button class="pane" aria-label="全屏">${icon("square")}</button>
        </div>
        <div class="msgs"><div class="msg">修改失败。请尝试其他方法。</div></div>
        <div class="find">
          <button class="look" aria-label="查找">${icon("binocular")}</button>
          <button class="arrow" aria-label="查找选项">${caret}</button>
        </div>
        <div class="filter">
          <select aria-label="选择过滤器"><option>所有草绘</option></select>
          ${caret}
        </div>
      </footer>

      <div class="taskbar">
        <button class="start" aria-label="开始">${icon("win")}</button>
        <button class="task">${icon("explorer", 24)}F:\\机械设计教程\\非...</button>
        <button class="task">${icon("wps", 24)}机械计算与非标选...</button>
        <button class="task active">${icon("creoDoc", 24)}S2D0001 (活动的) ...</button>
        <div class="tray">
          <button class="more" aria-label="显示隐藏的图标"><svg class="ico" width="12" height="8" viewBox="0 0 12 8"><path d="M1 7l5-5 5 5" fill="none" stroke="#fff" stroke-width="1.500"/></svg></button>
          <button class="lang">ENG</button>
          <button class="clock">20:45:13<br />2025/8/2</button>
        </div>
      </div>

      <div class="gauge"></div>
      <div class="mark">
        <b><span>野火</span>论坛</b>
        <em>www.proewildfire.cn</em>
        <svg width="20" height="44" viewBox="0 0 20 44"><path d="M5 0C13 7 19 17 17 26 16 34 11 40 4 43L1 38C7 34 8 28 6 22 5 17 4 12 1 9 6 12 9 16 10 20 12 14 10 7 5 0z" fill="#ff6633"/></svg>
      </div>
    `;
  }
}
